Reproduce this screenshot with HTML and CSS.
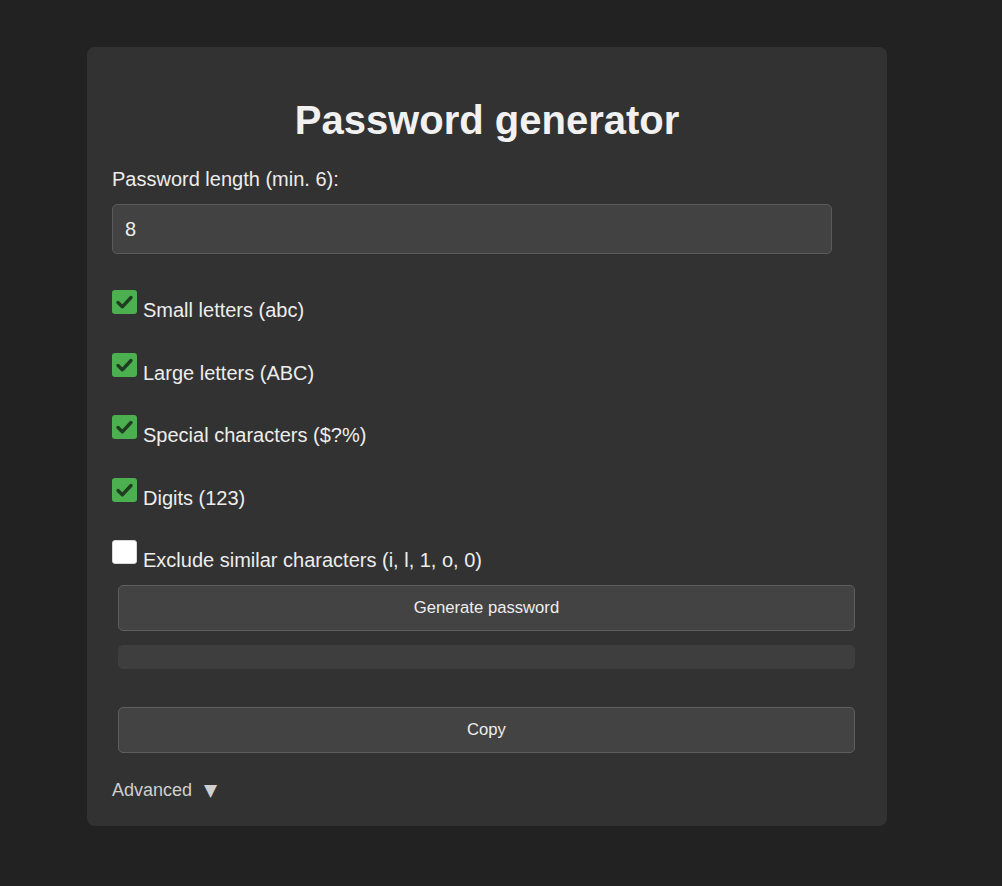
FILE: index.html
```html
<!DOCTYPE html>
<html lang="en">
<head>
<meta charset="utf-8">
<title>Password generator</title>
<link rel="stylesheet" href="styles.css">
</head>
<body>
<div class="card">
  <h1 class="title">Password generator</h1>
  <label class="field-label" for="len">Password length (min. 6):</label>
  <input class="num-input" id="len" type="text" value="8">
  <div class="options">
    <label class="option"><span class="box checked"><svg viewBox="0 0 25 24" width="25" height="24"><path d="M6 12.5 L10.3 16.8 L19 7.5" fill="none" stroke="#1f3d20" stroke-width="3.4" stroke-linecap="round" stroke-linejoin="round"/></svg></span>Small letters (abc)</label>
    <label class="option"><span class="box checked"><svg viewBox="0 0 25 24" width="25" height="24"><path d="M6 12.5 L10.3 16.8 L19 7.5" fill="none" stroke="#1f3d20" stroke-width="3.4" stroke-linecap="round" stroke-linejoin="round"/></svg></span>Large letters (ABC)</label>
    <label class="option"><span class="box checked"><svg viewBox="0 0 25 24" width="25" height="24"><path d="M6 12.5 L10.3 16.8 L19 7.5" fill="none" stroke="#1f3d20" stroke-width="3.4" stroke-linecap="round" stroke-linejoin="round"/></svg></span>Special characters ($?%)</label>
    <label class="option"><span class="box checked"><svg viewBox="0 0 25 24" width="25" height="24"><path d="M6 12.5 L10.3 16.8 L19 7.5" fill="none" stroke="#1f3d20" stroke-width="3.4" stroke-linecap="round" stroke-linejoin="round"/></svg></span>Digits (123)</label>
    <label class="option"><span class="box"></span>Exclude similar characters (i, l, 1, o, 0)</label>
  </div>
  <button class="btn btn-generate" type="button">Generate password</button>
  <div class="output"></div>
  <button class="btn btn-copy" type="button">Copy</button>
  <div class="advanced">Advanced<span class="arrow">▼</span></div>
</div>
</body>
</html>
```

FILE: styles.css
```css
html, body {
  margin: 0;
  padding: 0;
  background: #222222;
}
body {
  font-family: "Liberation Sans", Arial, sans-serif;
  color: #ececec;
  padding-top: 47px;
  padding-bottom: 40px;
}
.card {
  width: 800px;
  box-sizing: border-box;
  margin-left: 87px;
  padding: 25px 25px 25px 25px;
  background: #323232;
  border-radius: 8px;
}
.title {
  margin: 25px 0 25px;
  font-size: 40px;
  line-height: 46px;
  font-weight: bold;
  text-align: center;
  color: #f1f1f1;
}
.field-label {
  display: block;
  font-size: 20px;
  line-height: 23px;
  margin-bottom: 13px;
  color: #ededed;
}
.num-input {
  display: block;
  box-sizing: border-box;
  width: 720px;
  height: 50px;
  margin: 0;
  padding: 0 12px;
  border: 1px solid #5a5a5a;
  border-radius: 5px;
  background: #424242;
  color: #eeeeee;
  font-family: "Liberation Sans", Arial, sans-serif;
  font-size: 20px;
  outline: none;
}
.options {
  margin-top: 36px;
}
.option {
  display: block;
  font-size: 20px;
  line-height: 23px;
  margin-bottom: 30.5px;
  color: #ededed;
}
.option:last-child {
  margin-bottom: 0;
}
.box {
  display: inline-block;
  width: 25px;
  height: 24px;
  margin: 0 6px 3px 0;
  border-radius: 3px;
  background: #ffffff;
  box-sizing: border-box;
  border: 1px solid #d8d8d8;
  vertical-align: baseline;
}
.box.checked {
  background: #4caf50;
  border: none;
}
.box svg {
  display: block;
}
.btn {
  display: block;
  box-sizing: border-box;
  width: 737px;
  height: 46px;
  margin-left: 6px;
  padding: 0;
  border: 1px solid #5e5e5e;
  border-radius: 5px;
  background: #434343;
  color: #eeeeee;
  font-family: "Liberation Sans", Arial, sans-serif;
  font-size: 16.67px;
}
.btn-generate {
  margin-top: 13px;
}
.output {
  width: 737px;
  height: 24px;
  margin: 14px 0 0 6px;
  border-radius: 5px;
  background: #3e3e3e;
}
.btn-copy {
  margin-top: 38px;
}
.advanced {
  margin-top: 27px;
  font-size: 18px;
  line-height: 21px;
  color: #cfcfcf;
}
.arrow {
  margin-left: 12px;
  font-family: "DejaVu Sans", sans-serif;
  font-size: 17px;
}
```
